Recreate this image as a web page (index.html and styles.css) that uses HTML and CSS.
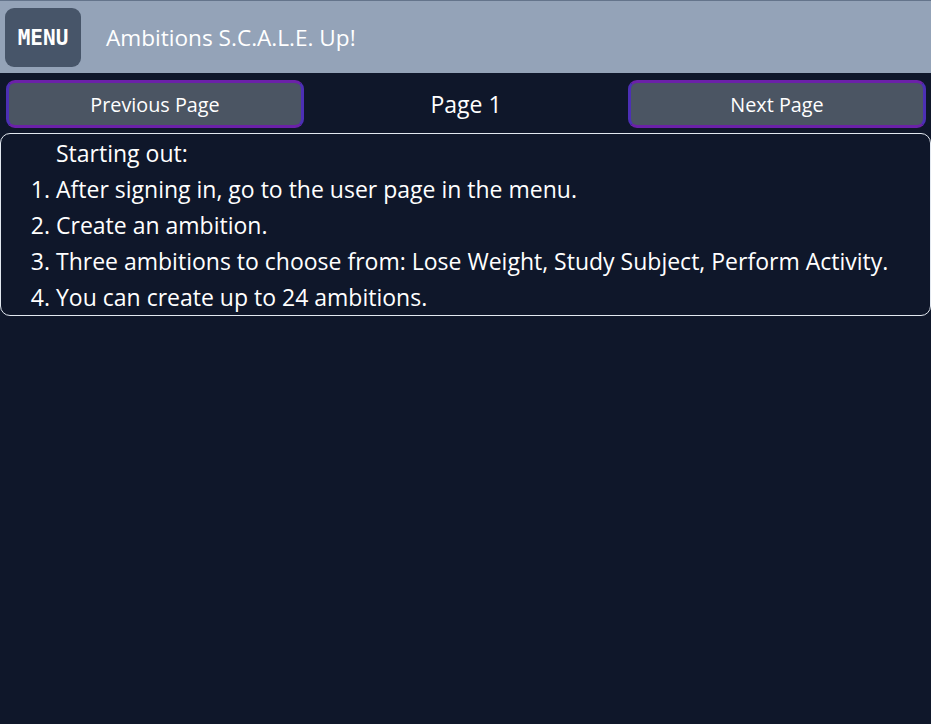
FILE: index.html
```html
<!DOCTYPE html>
<html>
<head>
<meta charset="utf-8">
<link rel="stylesheet" href="styles.css">
</head>
<body>
<header class="topbar">
  <button class="menu-btn">MENU</button>
  <h1 class="title">Ambitions S.C.A.L.E. Up!</h1>
</header>
<nav class="pager">
  <button class="page-btn">Previous Page</button>
  <span class="page-label">Page 1</span>
  <button class="page-btn">Next Page</button>
</nav>
<section class="content">
  <p class="intro">Starting out:</p>
  <ol class="steps">
    <li>After signing in, go to the user page in the menu.</li>
    <li>Create an ambition.</li>
    <li>Three ambitions to choose from: Lose Weight, Study Subject, Perform Activity.</li>
    <li>You can create up to 24 ambitions.</li>
  </ol>
</section>
</body>
</html>
```
FILE: styles.css
```css
* { box-sizing: border-box; }
html, body {
  margin: 0;
  padding: 0;
  background: #0f172a;
  color: #ffffff;
  font-family: "Open Sans", "Noto Sans", sans-serif;
  height: 100%;
}
.topbar {
  height: 73px;
  background: #94a3b8;
  border-top: 1px solid #64748b;
  display: flex;
  align-items: center;
  padding: 0 5px;
  gap: 25px;
}
.menu-btn {
  width: 76px;
  height: 59px;
  background: #475569;
  border: none;
  border-radius: 9px;
  color: #ffffff;
  font-family: "DejaVu Sans Mono", "Liberation Mono", monospace;
  font-weight: bold;
  font-size: 21px;
  padding: 0;
  margin-top: 1px;
}
.title {
  margin: 0;
  font-weight: normal;
  font-size: 22.6px;
  color: #ffffff;
}
.pager {
  display: grid;
  grid-template-columns: 298px 1fr 298px;
  align-items: center;
  padding: 7px 5px 0 6px;
  height: 55px;
}
.page-btn {
  height: 48px;
  background: #4b5563;
  border: 3px solid #6b21a8;
  border-left-color: #4c2fb5;
  border-right-color: #4c2fb5;
  border-radius: 9px;
  color: #ffffff;
  font-family: "Open Sans", "Noto Sans", sans-serif;
  font-size: 19.8px;
  padding: 0;
}
.page-label {
  text-align: center;
  font-size: 23px;
}
.content {
  margin-top: 5px;
  border: 1px solid #e2e8f0;
  border-radius: 10px;
  padding: 1px 0 0 0;
}
.intro {
  margin: 0;
  padding-left: 55px;
  font-size: 23px;
  line-height: 36px;
}
.steps {
  margin: 0;
  padding-left: 55px;
  font-size: 23px;
  line-height: 36px;
}
.steps li { padding-left: 0; }
```
